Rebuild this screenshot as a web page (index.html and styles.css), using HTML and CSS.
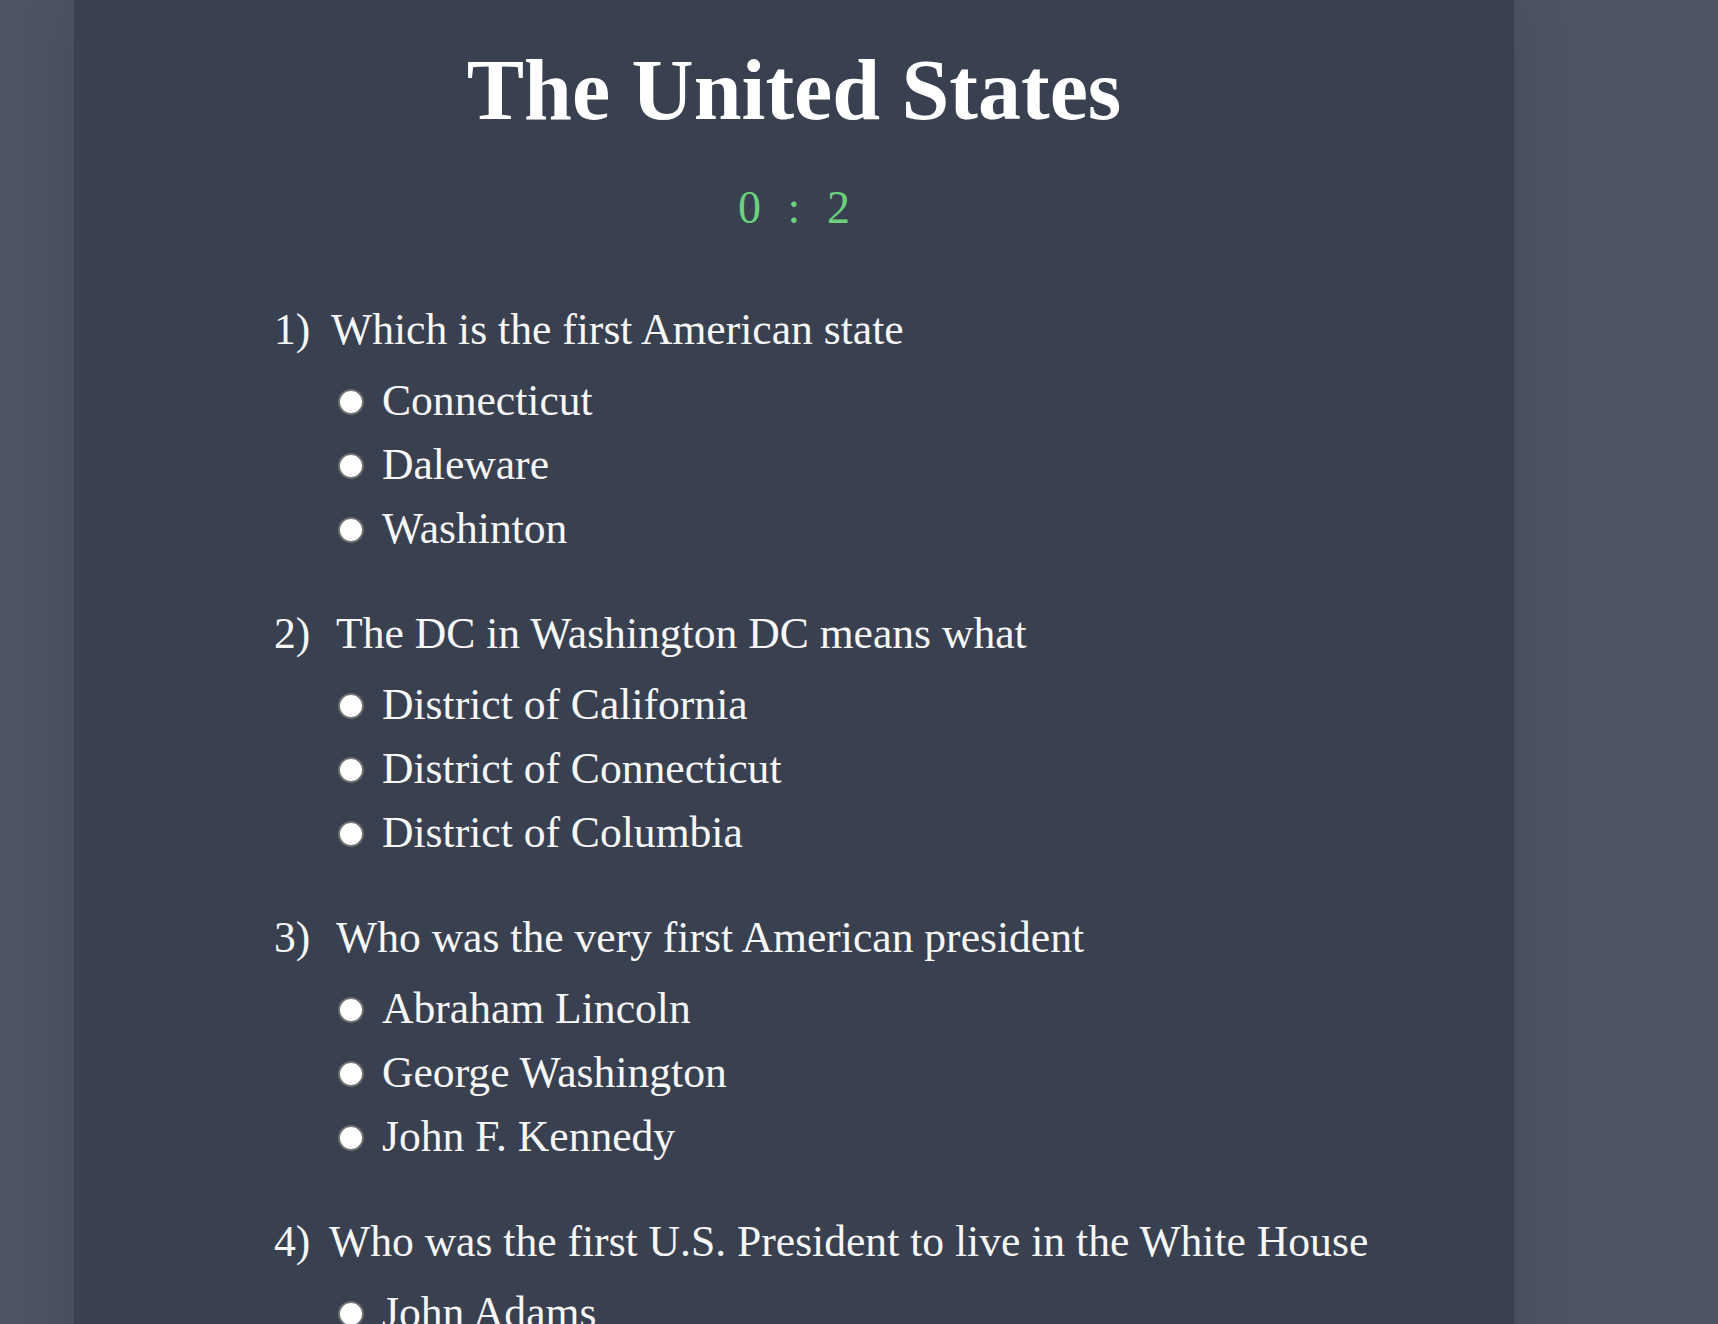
FILE: index.html
```html
<!DOCTYPE html>
<html lang="en">
<head>
<meta charset="utf-8">
<title>The United States</title>
<link rel="stylesheet" href="styles.css">
</head>
<body>
<main class="quiz">
  <h1 class="title">The United States</h1>
  <p class="score">0 : 2</p>
  <form class="questions">
    <div class="question">
      <p class="q-text"><span class="num num-narrow">1)</span>Which is the first American state</p>
      <ul class="options">
        <li><label class="option"><input type="radio" name="q1"><span>Connecticut</span></label></li>
        <li><label class="option"><input type="radio" name="q1"><span>Daleware</span></label></li>
        <li><label class="option"><input type="radio" name="q1"><span>Washinton</span></label></li>
      </ul>
    </div>
    <div class="question">
      <p class="q-text"><span class="num">2)</span>The DC in Washington DC means what</p>
      <ul class="options">
        <li><label class="option"><input type="radio" name="q2"><span>District of California</span></label></li>
        <li><label class="option"><input type="radio" name="q2"><span>District of Connecticut</span></label></li>
        <li><label class="option"><input type="radio" name="q2"><span>District of Columbia</span></label></li>
      </ul>
    </div>
    <div class="question">
      <p class="q-text"><span class="num">3)</span>Who was the very first American president</p>
      <ul class="options">
        <li><label class="option"><input type="radio" name="q3"><span>Abraham Lincoln</span></label></li>
        <li><label class="option"><input type="radio" name="q3"><span>George Washington</span></label></li>
        <li><label class="option"><input type="radio" name="q3"><span>John F. Kennedy</span></label></li>
      </ul>
    </div>
    <div class="question">
      <p class="q-text"><span class="num num-tight">4)</span>Who was the first U.S. President to live in the White House</p>
      <ul class="options">
        <li><label class="option"><input type="radio" name="q4"><span>John Adams</span></label></li>
        <li><label class="option"><input type="radio" name="q4"><span>Thomas Jefferson</span></label></li>
        <li><label class="option"><input type="radio" name="q4"><span>George Washington</span></label></li>
      </ul>
    </div>
  </form>
</main>
</body>
</html>
```

FILE: styles.css
```css
html, body {
  margin: 0;
  padding: 0;
}

body {
  background: #4d5462;
  font-family: "Liberation Serif", "Times New Roman", serif;
  color: #f7f7f7;
}

.quiz {
  width: 1440px;
  min-height: 100vh;
  margin: 0 0 0 74px;
  padding: 40px 0 80px;
  box-sizing: border-box;
  background: #394151;
  box-shadow: 0 0 60px rgba(0, 0, 0, 0.12);
}

.title {
  margin: 0;
  font-size: 86px;
  line-height: 100px;
  font-weight: 700;
  color: #ffffff;
  text-align: center;
}

.score {
  margin: 38px 0 0;
  font-size: 46px;
  line-height: 60px;
  word-spacing: 15px;
  color: #6dd17e;
  text-align: center;
}

.questions {
  margin: 63px 0 0;
  padding-left: 200px;
}

.question {
  margin-bottom: 45px;
}

.q-text {
  margin: 0;
  font-size: 43.6px;
  line-height: 56px;
  white-space: nowrap;
}

.num {
  display: inline-block;
  width: 62px;
}

.num-narrow {
  width: 57px;
}

.num-tight {
  width: 55px;
}

.options {
  list-style: none;
  margin: 11px 0 0;
  padding: 0 0 0 64px;
}

.option {
  display: flex;
  align-items: center;
  gap: 18px;
  height: 64px;
  font-size: 43.6px;
  line-height: 64px;
  white-space: nowrap;
}

.option input {
  appearance: none;
  -webkit-appearance: none;
  flex: none;
  width: 26px;
  height: 26px;
  margin: 3px 0 0;
  border: 2px solid #6f6f6f;
  border-radius: 50%;
  background: #ffffff;
  box-sizing: border-box;
}
```
